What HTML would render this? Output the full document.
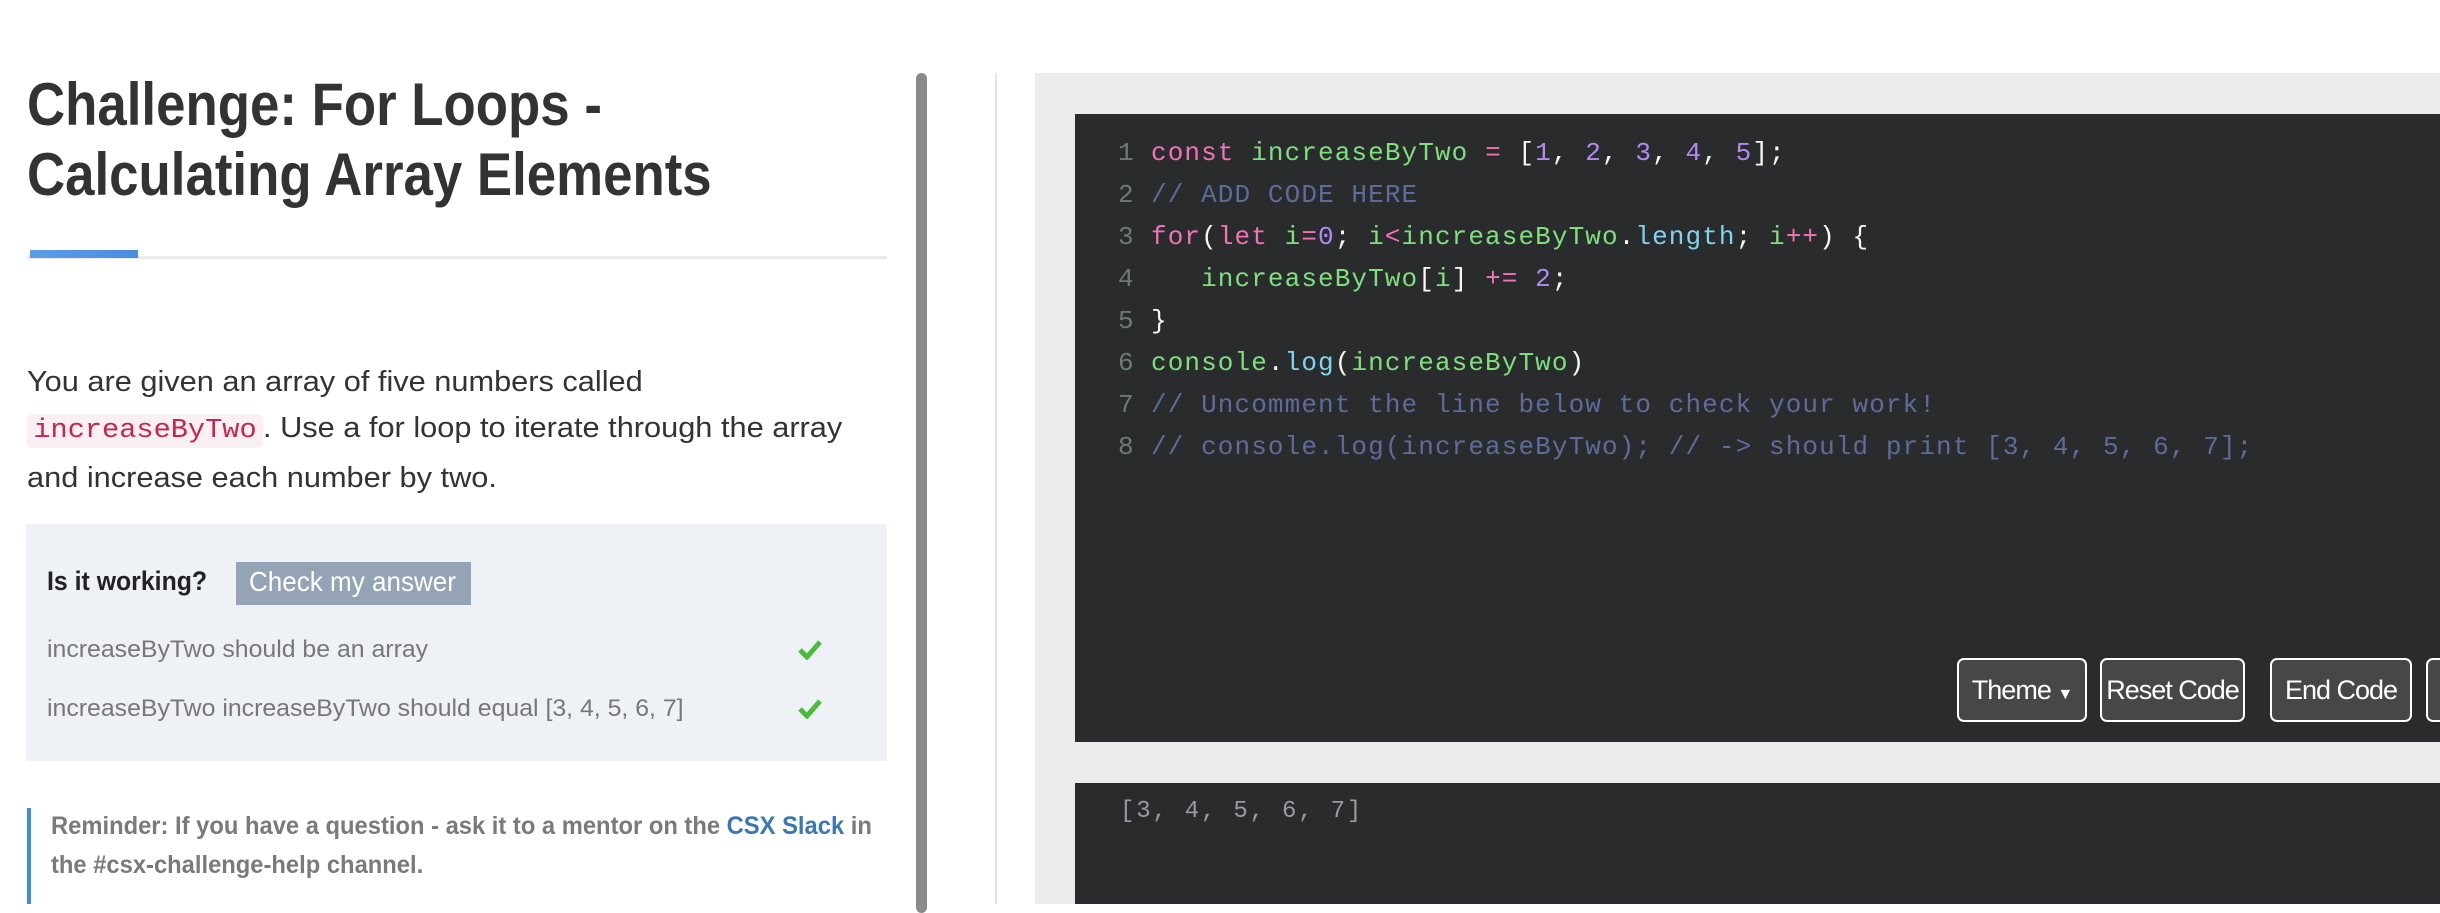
<!DOCTYPE html>
<html><head><meta charset="utf-8"><style>
*{margin:0;padding:0;box-sizing:border-box}
body{width:2440px;height:904px;overflow:hidden;background:#fff;font-family:"Liberation Sans",sans-serif;position:relative}
.abs{position:absolute}
.sx{transform-origin:0 0;white-space:nowrap}
h1{position:absolute;left:27px;top:70px;font-size:60px;line-height:70px;color:#333;font-weight:bold;transform:scaleX(0.88);transform-origin:0 0;white-space:nowrap}
.p{position:absolute;left:27px;font-size:29px;color:#333;transform:scaleX(1.06);transform-origin:0 0;white-space:nowrap}
code{font-family:"Liberation Mono",monospace;color:#c7254e;background:#f8f0f2;padding:2px 6px;border-radius:6px;font-size:27px}
.mono{font-family:"Liberation Mono",monospace;font-size:26px;letter-spacing:1.1px;white-space:pre}
.ln{position:absolute;left:1118px;color:#6c7a7a}
.cd{position:absolute;left:1151px;color:#f8f8f2}
.k{color:#f472b6}.g{color:#7ee07c}.n{color:#b08cf0}.c{color:#5f6b9a}.cy{color:#7fd4f0}
.btn{position:absolute;top:658px;height:64px;border:2px solid #fff;border-radius:7px;background:#464748;color:#fff;font-size:27px;line-height:60px;text-align:center;white-space:nowrap;letter-spacing:-1px}
</style></head><body>
<h1>Challenge: For Loops -<br>Calculating Array Elements</h1>
<div class="abs" style="left:27px;top:256px;width:860px;height:3px;background:#eaeaea"></div>
<div class="abs" style="left:30px;top:250px;width:108px;height:8px;background:linear-gradient(90deg,#5a9ee8,#4a8de0)"></div>
<div class="p" style="top:366px">You are given an array of five numbers called</div>
<div class="p" style="top:412px"><code>increaseByTwo</code>. Use a for loop to iterate through the array</div>
<div class="p" style="top:462px">and increase each number by two.</div>
<div class="abs" style="left:26px;top:524px;width:861px;height:237px;background:#eef2f6"></div>
<div class="abs sx" style="left:47px;top:566px;font-size:27px;font-weight:bold;color:#222;transform:scaleX(0.92)">Is it working?</div>
<div class="abs" style="left:236px;top:562px;width:235px;height:43px;background:#94a3b5"></div>
<div class="abs sx" style="left:249px;top:566px;font-size:28px;color:#fff;transform:scaleX(0.93)">Check my answer</div>
<div class="abs sx" style="left:47px;top:636px;font-size:24px;color:#777;transform:scaleX(1.035)">increaseByTwo should be an array</div>
<div class="abs sx" style="left:47px;top:695px;font-size:24px;color:#777;transform:scaleX(1.035)">increaseByTwo increaseByTwo should equal [3, 4, 5, 6, 7]</div>
<svg class="abs" style="left:798px;top:640px" width="24" height="20"><path d="M2 10 L9 17 L22 2" stroke="#4cbb3c" stroke-width="5" fill="none"/></svg>
<svg class="abs" style="left:798px;top:699px" width="24" height="20"><path d="M2 10 L9 17 L22 2" stroke="#4cbb3c" stroke-width="5" fill="none"/></svg>
<div class="abs" style="left:27px;top:808px;width:4px;height:96px;background:#3b8de0"></div>
<div class="abs sx" style="left:51px;top:812px;font-size:25px;font-weight:bold;color:#7a7a7a;transform:scaleX(0.95)">Reminder: If you have a question - ask it to a mentor on the <span style="color:#3a78b5">CSX Slack</span> in</div>
<div class="abs sx" style="left:51px;top:851px;font-size:25px;font-weight:bold;color:#7a7a7a;transform:scaleX(0.95)">the #csx-challenge-help channel.</div>
<div class="abs" style="left:916px;top:73px;width:11px;height:840px;background:#8a8a8a;border-radius:6px"></div>
<div class="abs" style="left:995px;top:73px;width:2px;height:831px;background:#e4e4e4"></div>
<div class="abs" style="left:1035px;top:73px;width:1405px;height:831px;background:#ececec"></div>
<div class="abs" style="left:1075px;top:114px;width:1365px;height:628px;background:#2a2b2d"></div>
<div class="abs" style="left:1075px;top:783px;width:1365px;height:121px;background:#2a2b2d"></div>
<div class="mono">
<div class="ln" style="top:138px">1</div><div class="cd" style="top:138px"><span class="k">const</span> <span class="g">increaseByTwo</span> <span class="k">=</span> [<span class="n">1</span>, <span class="n">2</span>, <span class="n">3</span>, <span class="n">4</span>, <span class="n">5</span>];</div>
<div class="ln" style="top:180px">2</div><div class="cd c" style="top:180px">// ADD CODE HERE</div>
<div class="ln" style="top:222px">3</div><div class="cd" style="top:222px"><span class="k">for</span>(<span class="k">let</span> <span class="g">i</span><span class="k">=</span><span class="n">0</span>; <span class="g">i</span><span class="k">&lt;</span><span class="g">increaseByTwo</span>.<span class="cy">length</span>; <span class="g">i</span><span class="k">++</span>) {</div>
<div class="ln" style="top:264px">4</div><div class="cd" style="top:264px">   <span class="g">increaseByTwo</span>[<span class="g">i</span>] <span class="k">+=</span> <span class="n">2</span>;</div>
<div class="ln" style="top:306px">5</div><div class="cd" style="top:306px">}</div>
<div class="ln" style="top:348px">6</div><div class="cd" style="top:348px"><span class="g">console</span>.<span class="cy">log</span>(<span class="g">increaseByTwo</span>)</div>
<div class="ln" style="top:390px">7</div><div class="cd c" style="top:390px">// Uncomment the line below to check your work!</div>
<div class="ln" style="top:432px">8</div><div class="cd c" style="top:432px">// console.log(increaseByTwo); // -&gt; should print [3, 4, 5, 6, 7];</div>
</div>
<div class="abs" style="left:1120px;top:798px;color:#9a9aa2;font-family:'Liberation Mono',monospace;font-size:24px;letter-spacing:1.8px;white-space:pre">[3, 4, 5, 6, 7]</div>
<div class="btn" style="left:1957px;width:130px">Theme <span style="font-size:16px">▼</span></div>
<div class="btn" style="left:2100px;width:145px">Reset Code</div>
<div class="btn" style="left:2270px;width:142px">End Code</div>
<div class="btn" style="left:2426px;width:60px"></div>
</body></html>
